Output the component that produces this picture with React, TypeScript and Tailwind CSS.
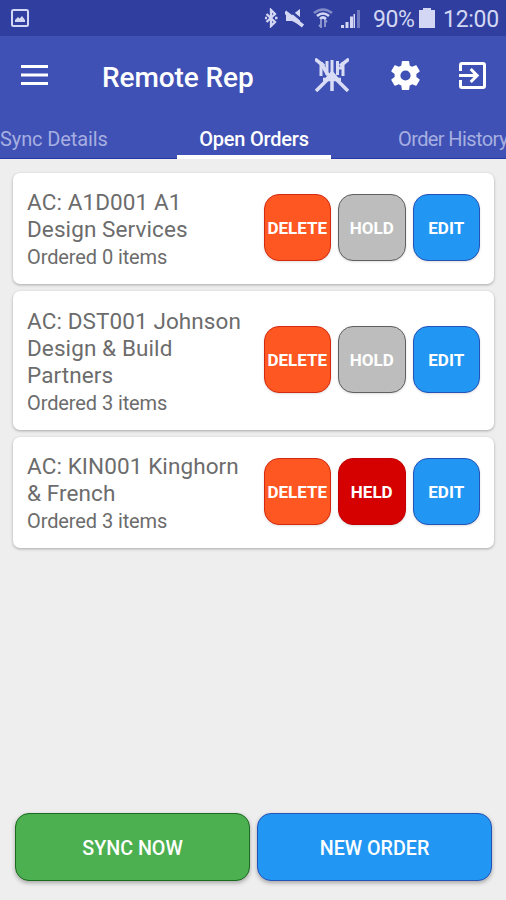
import React, { useState } from "react";

interface Order {
    account: string;
    items: number;
    held: boolean;
}

const orders: Order[] = [
    { account: "AC: A1D001 A1 Design Services", items: 0, held: false },
    { account: "AC: DST001 Johnson Design & Build Partners", items: 3, held: false },
    { account: "AC: KIN001 Kinghorn & French", items: 3, held: true },
];

const StatusBar = () => (
    <div className="h-9 bg-[#303f9f] flex items-center justify-between pl-[11px] pr-[7px] text-[#d3d7f3]">
        <svg width="18" height="18" viewBox="0 0 18 18">
            <rect x="1" y="1" width="16" height="16" rx="1.5" fill="none" stroke="currentColor" strokeWidth="2" />
            <path d="M4 13v-2l3-3 1.5 1.5L11 7l3 4v2z" fill="currentColor" />
        </svg>
        <div className="flex items-center">
            {/* Bluetooth */}
            <svg width="13" height="20" viewBox="0 0 13 20" className="mr-[7px]">
                <path d="M1.500 6l8.500 8-4 4V2l4 4-8.500 8M0 10h2M10 10h2.500" fill="none" stroke="currentColor" strokeWidth="2.300" />
            </svg>
            {/* Muted speaker */}
            <svg width="20" height="20" viewBox="0 0 20 20" className="mr-[8px]">
                <path d="M1 7h6l8-6v16l-8-4H1z" fill="currentColor" />
                <path d="M2 0l18 15" stroke="#303f9f" strokeWidth="2.500" />
                <path d="M0 4l18 14" stroke="currentColor" strokeWidth="3.500" />
            </svg>
            {/* Wifi with traffic arrows */}
            <svg width="20" height="20" viewBox="0 0 20 20" className="mr-[8px]">
                <g fill="none" stroke="currentColor" strokeWidth="2.600">
                    <path d="M1 5q9-7 18 0" opacity=".5" />
                    <path d="M4 8q6-5 12 0M7 11q3-3 6 0" />
                    <path d="M8 12v7l-2-2M12 19v-7l2 2" strokeWidth="1.800" opacity=".6" />
                </g>
            </svg>
            {/* Signal strength */}
            <svg width="20" height="19" viewBox="0 0 20 19" className="mr-[12px]">
                <path d="M0 16h3v3H0zM4.500 13h3v6h-3zM9 7.500h3V19H9zM12.500 5H14v14h-1.500z" fill="currentColor" />
                <path d="M16 1h3v18h-3z" fill="currentColor" opacity=".4" />
            </svg>
            <span className="text-[23px] leading-9 w-[41px] mt-[3px] whitespace-nowrap tracking-[-0.4px]">90%</span>
            <svg width="16" height="20" viewBox="0 0 16 20" className="ml-[5px] mr-[8px]">
                <path d="M4 0h8v2h4v18H0V2h4z" fill="currentColor" />
            </svg>
            <span className="text-[23px] leading-9 w-[56px] mt-[3px] whitespace-nowrap tracking-[-0.3px]">12:00</span>
        </div>
    </div>
);

const AppBar = () => (
    <div className="h-20 flex items-center pl-[21px] pr-[20px] text-white">
        <button aria-label="Menu" className="mt-[-2px]">
            <svg width="27" height="20" viewBox="0 0 27 20">
                <path d="M0 1.500h27M0 10h27M0 18.500h27" stroke="currentColor" strokeWidth="3" />
            </svg>
        </button>
        <h1 className="ml-[54px] mt-[3px] text-[28px] tracking-[-0.1px] font-medium whitespace-nowrap">Remote Rep</h1>
        <div className="ml-auto mt-[-2px] flex items-center">
            {/* Company monogram over crossed lines */}
            <svg width="34" height="34" viewBox="0 0 34 34" fill="none" stroke="#d8dcf5" className="mr-[39px]">
                <path d="M0 1l9 7M34 1l-9 7M1 33l13-13M33 33L20 20" strokeWidth="3.500" />
                <path d="M6 4v14M12 3v14M17 2v17M22.500 3v14M28 4v14M22 10h6" strokeWidth="3" />
                <path d="M6 5l7 12M8 21.500h18M17 17v16M17 15l-6 7M17 15l6 7" strokeWidth="3.500" />
            </svg>
            <svg width="35" height="35" viewBox="0 0 24 24" fill="currentColor" className="mr-[36px]">
                <path d="M19.430 12.980c.04-.32.07-.64.07-.98s-.03-.66-.07-.98l2.110-1.650c.19-.15.24-.42.12-.64l-2-3.460c-.12-.22-.39-.3-.61-.22l-2.490 1c-.52-.4-1.080-.73-1.690-.98l-.38-2.650A.49.49 0 0 0 14 2h-4c-.25 0-.46.18-.49.42l-.38 2.650c-.61.25-1.170.59-1.690.98l-2.490-1c-.23-.09-.49 0-.61.22l-2 3.460c-.13.22-.07.49.12.64l2.110 1.650c-.04.32-.07.65-.07.98s.03.66.07.98l-2.110 1.650c-.19.15-.24.42-.12.64l2 3.460c.12.22.39.3.61.22l2.490-1c.52.4 1.080.73 1.690.98l.38 2.650c.03.24.24.42.49.42h4c.25 0 .46-.18.49-.42l.38-2.650c.61-.25 1.170-.59 1.690-.98l2.490 1c.23.09.49 0 .61-.22l2-3.460c.12-.22.07-.49-.12-.64zM12 15.500a3.500 3.500 0 1 1 0-7 3.500 3.500 0 0 1 0 7z" />
            </svg>
            <svg width="27" height="27" viewBox="3 3 18 18" fill="currentColor">
                <path d="M10.090 15.590L11.500 17l5-5-5-5-1.410 1.410L12.670 11H3v2h9.670zM19 3H5a2 2 0 0 0-2 2v4h2V5h14v14H5v-4H3v4a2 2 0 0 0 2 2h14a2 2 0 0 0 2-2V5a2 2 0 0 0-2-2z" />
            </svg>
        </div>
    </div>
);

const Tabs = () => (
    <div className="h-[43px] flex text-[20px] leading-[46px] tracking-[-0.2px] whitespace-nowrap text-[#a6afe0]">
        <div className="w-[177px] shrink-0 tracking-[-0.1px] border-b border-[#2438a8]">Sync Details</div>
        <div className="w-[154px] shrink-0 text-center text-white font-medium border-b-[4px] border-white">Open Orders</div>
        <div className="w-[175px] shrink-0 pl-[67px] tracking-[-0.6px] border-b border-[#2438a8]">Order History</div>
    </div>
);

const squareButton = "size-[67.5px] pt-[2px] shrink-0 rounded-[15px] border text-[17px] font-bold text-white shadow-sm flex items-center justify-center";

const OrderCard = ({ order }: { order: Order }) => {
    const [held, setHeld] = useState(order.held);

    return (
        <div className="bg-white rounded-[7px] pl-[14px] pr-[14px] pt-[16.5px] pb-[12px] flex items-center justify-between shadow-[0_1px_3px_rgba(0,0,0,0.3)] text-[#6c6c6c]">
            <div className="w-[220px]">
                <p className="text-[22.5px] leading-[27px] tracking-[0.1px]">{order.account}</p>
                <p className="text-[20px] leading-[29px] tracking-[-0.1px]">Ordered {order.items} items</p>
            </div>
            <div className="flex gap-[7px] mt-[-6px]">
                <button className={`${squareButton} bg-[#ff5722] border-[#d52a10]`}>DELETE</button>
                <button
                    className={`${squareButton} ${held ? "bg-[#d50000] border-[#c40000]" : "bg-[#bdbdbd] border-[#606060]"}`}
                    onClick={() => setHeld(!held)}
                >
                    {held ? "HELD" : "HOLD"}
                </button>
                <button className={`${squareButton} bg-[#2196f3] border-[#2453b8]`}>EDIT</button>
            </div>
        </div>
    );
};

const App = () => {
    return (
        <div className="w-[506px] h-[900px] overflow-hidden flex flex-col bg-[#eeeeee] font-[Roboto,sans-serif]">
            <StatusBar />
            <div className="bg-[#3f51b5]">
                <AppBar />
                <Tabs />
            </div>
            <div className="flex-1 flex flex-col gap-[7px] pt-[13.5px] pl-[13px] pr-[12px]">
                {orders.map((order) => (
                    <OrderCard key={order.account} order={order} />
                ))}
            </div>
            <div className="flex gap-[7px] pl-[15px] pr-[14px] pb-[19px] text-[19.7px] font-medium text-white">
                <button className="flex-1 h-[68px] pt-[4px] rounded-[14px] border border-[#1b6a20] bg-[#4caf50] shadow-[0_2px_4px_rgba(0,0,0,0.3)]">SYNC NOW</button>
                <button className="flex-1 h-[68px] pt-[4px] rounded-[14px] border border-[#2453b8] bg-[#2196f3] shadow-[0_2px_4px_rgba(0,0,0,0.3)]">NEW ORDER</button>
            </div>
        </div>
    );
};

export default App;
